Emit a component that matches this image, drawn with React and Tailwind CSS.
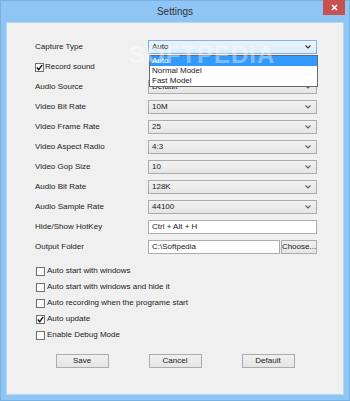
import React from 'react';

const font = { fontFamily: '"Liberation Sans", Arial, sans-serif' };

const Chevron = ({ dark }) => (
  <svg width="6" height="4" viewBox="0 0 6 4" className="shrink-0">
    <path d="M0.5 0.5 L3 3 L5.5 0.5" fill="none" stroke={dark ? '#333' : '#606060'} strokeWidth="1.1" />
  </svg>
);

const Select = ({ value, focused }) => (
  <div
    className={`h-[14px] w-[169px] flex items-center justify-between pl-[3px] pr-[5px] border ${
      focused
        ? 'border-[#7eb4ea] bg-gradient-to-b from-[#ecf4fc] to-[#dcecfc]'
        : 'border-[#acacac] bg-gradient-to-b from-[#f2f2f2] to-[#e5e5e5]'
    }`}
  >
    <span className="leading-none">{value}</span>
    <Chevron dark={focused} />
  </div>
);

const TextBox = ({ value, width }) => (
  <div className={`h-[14px] ${width} flex items-center pl-[3px] border border-[#abadb3] bg-white`}>
    <span className="leading-none">{value}</span>
  </div>
);

const Check = ({ checked }) => (
  <div className="w-[9px] h-[9px] border border-[#707070] bg-white flex items-center justify-center shrink-0">
    {checked && (
      <svg width="7" height="7" viewBox="0 0 7 7">
        <path d="M0.8 3.6 L2.7 5.6 L6.2 0.9" fill="none" stroke="#111" strokeWidth="1.4" />
      </svg>
    )}
  </div>
);

const Row = ({ label, children }) => (
  <div className="h-[20px] flex items-center">
    <div className="w-[113px]">{label}</div>
    {children}
  </div>
);

const Btn = ({ children }) => (
  <div className="w-[53px] h-[14px] flex items-center justify-center border border-[#acacac] bg-gradient-to-b from-[#f0f0f0] to-[#e5e5e5] leading-none">
    {children}
  </div>
);

const selects = [
  ['Audio Source', 'Default'],
  ['Video Bit Rate', '10M'],
  ['Video Frame Rate', '25'],
  ['Video Aspect Radio', '4:3'],
  ['Video Gop Size', '10'],
  ['Audio Bit Rate', '128K'],
  ['Audio Sample Rate', '44100'],
];

const options = [
  ['Auto start with windows', false],
  ['Auto start with windows and hide it', false],
  ['Auto recording when the programe start', false],
  ['Auto update', true],
  ['Enable Debug Mode', false],
];

export default function App() {
  return (
    <div
      style={font}
      className="w-[350px] h-[401px] bg-[#8ec5f5] border border-[#79b0e2] flex flex-col text-[8px] text-[#1a1a1a]"
    >
      <div className="h-[21px] relative flex items-center justify-center shrink-0">
        <span className="text-[10px] text-[#333] leading-none">Settings</span>
        <div className="absolute right-[4px] top-[-1px] w-[22px] h-[15px] bg-[#c75050] flex items-center justify-center">
          <svg width="7" height="7" viewBox="0 0 7 7">
            <path d="M1 1 L6 6 M6 1 L1 6" stroke="#fff" strokeWidth="1.6" />
          </svg>
        </div>
      </div>

      <div className="mx-[5px] h-[373px] bg-[#f0f0f0] border border-[#b7d6f2] relative pl-[28px] pt-[14px]">
        <Row label="Capture Type">
          <Select value="Auto" focused />
        </Row>
        <div className="h-[20px] flex items-center gap-[1px]">
          <Check checked />
          <span>Record sound</span>
        </div>
        {selects.map(([l, v]) => (
          <Row key={l} label={l}>
            <Select value={v} />
          </Row>
        ))}
        <Row label="Hide/Show HotKey">
          <TextBox value="Ctrl + Alt + H" width="w-[169px]" />
        </Row>
        <Row label="Output Folder">
          <TextBox value="C:\Softpedia" width="w-[132px]" />
          <div className="ml-[1px] w-[36px] h-[14px] flex items-center justify-center border border-[#acacac] bg-gradient-to-b from-[#f0f0f0] to-[#e5e5e5] leading-none">
            Choose...
          </div>
        </Row>

        <div className="mt-[6px] pl-[1px] flex flex-col">
          {options.map(([l, c]) => (
            <div key={l} className="h-[16px] flex items-center gap-[2px]">
              <Check checked={c} />
              <span>{l}</span>
            </div>
          ))}
        </div>

        <div className="mt-[11px] -ml-[28px] flex justify-center gap-[40px]">
          <Btn>Save</Btn>
          <Btn>Cancel</Btn>
          <Btn>Default</Btn>
        </div>

        <div className="absolute left-[142px] top-[32px] w-[169px] bg-white border border-[#6a6a6a] flex flex-col">
          <div className="h-[10px] flex items-center pl-[2px] bg-[#3399ff] text-white leading-none">Auto</div>
          <div className="h-[10px] flex items-center pl-[2px] leading-none">Normal Model</div>
          <div className="h-[10px] flex items-center pl-[2px] leading-none">Fast Model</div>
        </div>

        <span className="absolute left-[122px] top-[20px] text-[24px] font-bold tracking-[1px] text-white/40 pointer-events-none leading-none">
          SOFTPEDIA
        </span>
      </div>
    </div>
  );
}
